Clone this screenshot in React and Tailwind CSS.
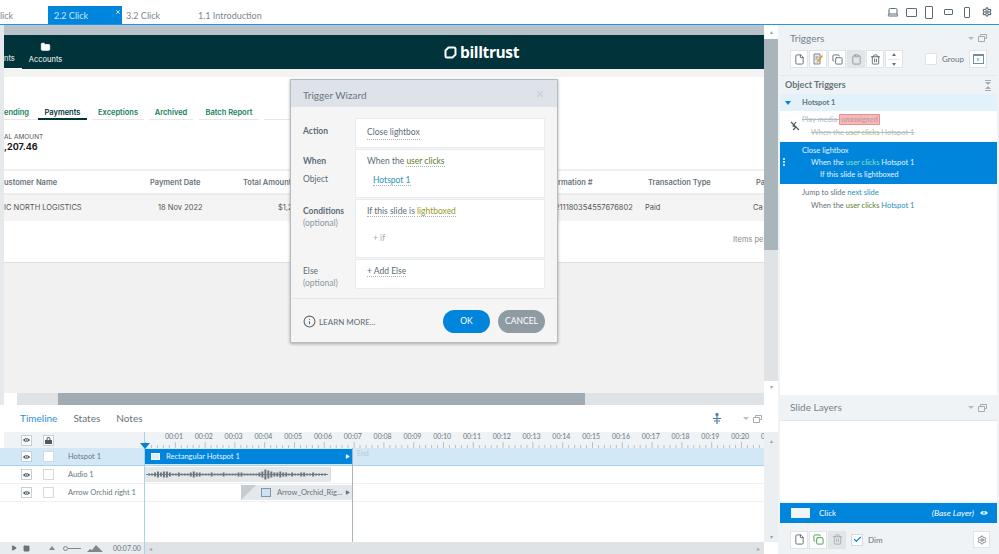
import React from 'react';
import { Laptop, Settings, File, Copy, Clipboard, Trash2, Check, Info, X, Play, Square, Folder } from 'lucide-react';

const ticks = ['00:01','00:02','00:03','00:04','00:05','00:06','00:07','00:08','00:09','00:10','00:11','00:12','00:13','00:14','00:15','00:16','00:17','00:18','00:19','00:20','0'];

function IconBtn({ children, pressed }) {
  return (
    <div className={`w-[18px] h-[18px] flex items-center justify-center border border-[#dfe4e7] ${pressed ? 'bg-[#e3e6e8]' : 'bg-white'}`}>
      {children}
    </div>
  );
}

function EyeIcon({ className = '', pupil = '#ffffff' }) {
  return (
    <svg className={className} viewBox="0 0 10 8" fill="currentColor">
      <path d="M0 4C2 .6 8 .6 10 4 8 7.4 2 7.4 0 4z" />
      <circle cx="5" cy="4" r="1.9" fill={pupil} />
      <circle cx="5" cy="4" r="1" />
    </svg>
  );
}

function EyeBox() {
  return (
    <div className="w-[11px] h-[11px] shrink-0 bg-white border border-[#c9d0d5] flex items-center justify-center">
      <EyeIcon className="w-[7px] h-[6px] text-[#4c5a62]" />
    </div>
  );
}

function PanelControls() {
  return (
    <div className="flex items-center gap-[4px]">
      <div className="w-0 h-0 border-l-[3px] border-r-[3px] border-t-[3px] border-l-transparent border-r-transparent border-t-[#b3bcc2]" />
      <svg className="w-[9px] h-[8px] text-[#a3acb2]" viewBox="0 0 9 8" fill="none" stroke="currentColor">
        <path d="M2.5 2V.5h6v4H7M.5 2.5h6v5h-6z" />
      </svg>
    </div>
  );
}

function Dotted({ className = '', children }) {
  return <span className={`border-b border-dotted border-[#aab3b9] ${className}`}>{children}</span>;
}

function Ruler() {
  const marks = [];
  for (let i = 0; i < 106; i++) {
    const x = 0.5 + i * 5.96;
    marks.push(<line key={i} x1={x} x2={x} y1={i % 5 === 0 ? 10 : 13} y2="16" stroke="#b9c1c6" strokeWidth="1" />);
  }
  return <svg className="absolute left-0 top-0 w-[620px] h-[16px]" viewBox="0 0 620 16">{marks}</svg>;
}

function Waveform() {
  const h = [1,1,2,3,2,3,3,2,1,1,2,1,1,1,2,3,2,2,1,1,1,2,1,1,1,2,1,1,1,1,2,2,1,1,1,1,1,2,3,5,4,3,2,2,3,2,2,1,2,1,1,2,2,1,1,2,1,1,1,1];
  return (
    <svg className="w-full h-full" viewBox="0 0 186 15" preserveAspectRatio="none">
      <line x1="1" x2="184" y1="7.5" y2="7.5" stroke="#7d858a" strokeWidth="1" />
      {h.map((v, i) => (
        <line key={i} x1={4 + i * 3} x2={4 + i * 3} y1={7.5 - v} y2={7.5 + v} stroke="#6d757a" strokeWidth="2" />
      ))}
    </svg>
  );
}

function Modal() {
  return (
    <div className="absolute left-[290px] top-[54px] w-[268px] h-[264px] bg-[#f5f5f5] border border-[#b4babe] shadow-[0_1px_3px_rgba(0,0,0,0.3)] text-[#5d6b74] font-['Lato',sans-serif]">
      <div className="h-[27px] bg-[#dde3e8] flex items-center justify-between pl-[12px] pr-[12px] text-[10px] text-[#6a7780]">
        <span className="mt-[3px]">Trigger Wizard</span>
        <X className="w-[10px] h-[10px] text-[#cbd2d7]" strokeWidth={3} />
      </div>
      <div className="pl-[12px] pr-[12px] pt-[11px] flex flex-col gap-[1px] text-[8.5px]">
        <div className="flex h-[30px]">
          <div className="w-[52px] pt-[7px] font-bold">Action</div>
          <div className="w-[190px] h-[30px] bg-white border border-[#e8ecef] pl-[11px] flex items-center"><Dotted>Close lightbox</Dotted></div>
        </div>
        <div className="flex h-[49px]">
          <div className="w-[52px] pt-[6px]">
            <div className="font-bold">When</div>
            <div className="mt-[5px]">Object</div>
          </div>
          <div className="w-[190px] h-[49px] bg-white border border-[#e8ecef] pl-[11px] pt-[5px]">
            <div>When the <Dotted className="text-[#5e7d2c]">user clicks</Dotted></div>
            <div className="mt-[6px] pl-[6px]"><Dotted className="text-[#2a93b4]">Hotspot 1</Dotted></div>
          </div>
        </div>
        <div className="flex h-[59px]">
          <div className="w-[52px] pt-[6px] leading-[12px]">
            <div className="font-bold">Conditions</div>
            <div className="text-[#8c979e]">(optional)</div>
          </div>
          <div className="w-[190px] h-[59px] bg-white border border-[#e8ecef] pl-[11px] pt-[5px]">
            <div><Dotted>If this slide is</Dotted> <Dotted className="text-[#9b9a2a]">lightboxed</Dotted></div>
            <div className="mt-[14px] pl-[6px] text-[#a3acb2]">+ if</div>
          </div>
        </div>
        <div className="flex h-[30px]">
          <div className="w-[52px] pt-[6px] leading-[12px]">
            <div>Else</div>
            <div className="text-[#8c979e]">(optional)</div>
          </div>
          <div className="w-[190px] h-[30px] bg-white border border-[#e8ecef] pl-[11px] pt-[5px]"><Dotted>+ Add Else</Dotted></div>
        </div>
      </div>
      <div className="mt-[9px] border-t border-[#e3e7ea] pl-[12px] pr-[12px] pt-[11px] flex items-center">
        <Info className="w-[13px] h-[13px] text-[#5d6b74]" />
        <span className="ml-[3px] text-[8px]">LEARN MORE...</span>
        <div className="ml-auto w-[47px] h-[23px] rounded-full bg-[#0085dc] text-white text-[8.5px] flex items-center justify-center">OK</div>
        <div className="ml-[8px] w-[47px] h-[23px] rounded-full bg-[#8f9ba3] text-white text-[8.5px] flex items-center justify-center">CANCEL</div>
      </div>
    </div>
  );
}

function Slide() {
  return (
    <div className="relative flex-1 min-w-0 overflow-hidden flex flex-col bg-[#f1f1f1] font-['Inter',sans-serif]">
      <div className="h-[10px] bg-[#b9c3c9] shrink-0" />
      <div className="h-[34px] bg-[#00333a] shrink-0 flex items-center text-white text-[7.5px] relative">
        <div className="absolute left-0 bottom-0 w-[18px] h-[1px] bg-white" />
        <span className="mt-[14px]">nts</span>
        <div className="ml-[14px] pt-[3px] flex flex-col items-center gap-[2px]">
          <Folder className="w-[11px] h-[10px] fill-white text-white" />
          <span>Accounts</span>
        </div>
        <div className="ml-auto mr-[245px] mt-[1px] flex items-center gap-[3px] text-[15.5px] font-bold tracking-tight">
          <svg className="w-[13px] h-[13px]" viewBox="0 0 13 13" fill="none" stroke="white" strokeWidth="2">
            <path d="M4.5 1.5H10a1.5 1.5 0 011.5 1.5v5.5l-3 3H3A1.5 1.5 0 011.5 10V4.5z" />
          </svg>
          <span className="font-['Open_Sans',sans-serif]">billtrust</span>
        </div>
      </div>
      <div className="h-[8px] shrink-0 bg-[#f3f3f3]" />
      <div className="h-[186px] shrink-0 bg-white border-b border-[#dfdfdf]">
        <div className="h-[44px] pt-[32px] flex text-[7.5px] font-semibold text-[#14805e] leading-none">
          <span className="w-[34px] border-b border-[#e8e8e8] h-[11px]">ending</span>
          <span className="w-[49px] text-center text-[#00333a] border-b-2 border-[#00333a] h-[11px]">Payments</span>
          <span className="ml-[5px] w-[52px] text-center border-b border-[#e8e8e8] h-[11px]">Exceptions</span>
          <span className="ml-[5px] w-[44px] text-center border-b border-[#e8e8e8] h-[11px]">Archived</span>
          <span className="ml-[6px] w-[60px] text-center border-b border-[#e8e8e8] h-[11px]">Batch Report</span>
          <span className="ml-[5px] w-[26px] border-b border-[#e8e8e8] h-[11px]" />
        </div>
        <div className="mt-[13px] text-[6.5px] text-[#555] leading-none">AL AMOUNT</div>
        <div className="mt-[1px] text-[9px] font-bold text-[#1a1a1a] leading-none">,207.46</div>
        <div className="mt-[18px] pt-[3px] border-t-2 border-[#efefef] h-[24px] grid grid-cols-[146px_93px_313px_92px_108px_20px] items-center text-[7.5px] font-semibold text-[#66737b] whitespace-nowrap">
          <span>ustomer Name</span><span>Payment Date</span><span>Total Amount</span><span>irmation #</span><span>Transaction Type</span><span>Pa</span>
        </div>
        <div className="h-[28px] bg-[#f4f4f4] border-t-2 border-[#ececec] grid grid-cols-[154px_120px_278px_89px_108px_20px] items-center text-[7.5px] text-[#555] whitespace-nowrap">
          <span>IC NORTH LOGISTICS</span><span>18 Nov 2022</span><span>$1,2</span><span className="-ml-[1px]">211180354557676802</span><span>Paid</span><span>Ca</span>
        </div>
        <div className="mt-[13px] pl-[729px] text-[7.5px] text-[#8a8a8a] whitespace-nowrap">Items pe</div>
      </div>
    </div>
  );
}

function TrackLabel({ name, active }) {
  return (
    <div className={`h-[18px] flex items-center pl-[21px] text-[7.5px] text-[#6a7780] border-b ${active ? 'bg-[#d3e8f6] border-[#a9d0ec]' : 'border-[#eef0f2]'}`}>
      <EyeBox />
      <div className="ml-[11px] w-[11px] h-[11px] shrink-0 bg-white border border-[#d5dade]" />
      <span className="ml-[14px] whitespace-nowrap">{name}</span>
    </div>
  );
}

function Timeline() {
  return (
    <div className="h-[149px] bg-white flex flex-col font-['Lato',sans-serif] pl-[4px]">
      <div className="h-[27px] shrink-0 flex items-center pl-[16px] pr-[16px] text-[10px] text-[#66737b] gap-[16px]">
        <span className="text-[#2f8fd8]">Timeline</span>
        <span>States</span>
        <span>Notes</span>
        <svg className="ml-auto w-[12px] h-[12px] text-[#4f7fa8]" viewBox="0 0 12 12" fill="none" stroke="currentColor" strokeWidth="1.2">
          <path d="M6 1v10M2 5.5h8M3 8h6" />
          <circle cx="6" cy="1.5" r="1" fill="currentColor" />
        </svg>
        <div className="ml-[4px]"><PanelControls /></div>
      </div>
      <div className="flex-1 min-h-0 flex">
        <div className="w-[140px] shrink-0 flex flex-col">
          <div className="h-[16px] bg-[#f0f3f5] flex items-center pl-[17px]">
            <EyeBox />
            <div className="ml-[11px] w-[11px] h-[11px] bg-white border border-[#c9d0d5] flex items-center justify-center">
              <svg className="w-[7px] h-[7px] text-[#4c5a62]" viewBox="0 0 7 7" fill="currentColor">
                <path d="M1.5 3V2a2 2 0 014 0v1H7v4H0V3zm1 0h2V2a1 1 0 00-2 0z" />
              </svg>
            </div>
          </div>
          <div className="-ml-[4px]">
            <TrackLabel name="Hotspot 1" active />
            <TrackLabel name="Audio 1" />
            <TrackLabel name="Arrow Orchid right 1" />
          </div>
          <div className="flex-1" />
          <div className="h-[12px] bg-[#e8ecee] flex items-center text-[7px] text-[#66737b] -ml-[4px] pl-[11px]">
            <Play className="w-[6px] h-[6px] fill-[#66737b] text-[#66737b]" />
            <Square className="ml-[6px] w-[7px] h-[7px] fill-[#66737b] text-[#66737b]" />
            <div className="ml-[19px] w-0 h-0 border-l-[3px] border-r-[3px] border-b-[4px] border-l-transparent border-r-transparent border-b-[#7c878e]" />
            <div className="ml-[8px] w-[18px] flex items-center">
              <div className="w-[5px] h-[5px] shrink-0 rounded-full border border-[#7c878e]" />
              <div className="flex-1 h-[1px] bg-[#7c878e]" />
            </div>
            <svg className="ml-[6px] w-[16px] h-[7px] text-[#7c878e]" viewBox="0 0 16 7" fill="currentColor">
              <path d="M0 7l3-3 2 1 4-5 7 7z" />
            </svg>
            <span className="ml-[10px]">00:07.00</span>
          </div>
        </div>
        <div className="relative flex-1 min-w-0 flex flex-col border-l border-[#a9d0ec]">
          <div className="relative h-[16px] bg-[#f0f3f5] overflow-hidden">
            <Ruler />
            <div className="relative flex pl-[20px] text-[7px] text-[#6a7780] leading-none pt-[1px]">
              {ticks.map((t) => <span key={t} className="w-[29.8px] shrink-0">{t}</span>)}
            </div>
          </div>
          <div className="h-[18px] bg-[#d3e8f6] border-b border-[#a9d0ec] flex">
            <div className="w-[207px] h-[15px] mt-[1px] bg-[#0085dc] flex items-center pl-[6px] pr-[2px] text-[7.5px] text-[#e6f3fc]">
              <div className="w-[9px] h-[7px] bg-[#dfeefa] border border-white shrink-0" />
              <span className="ml-[6px]">Rectangular Hotspot 1</span>
              <Play className="ml-auto w-[5px] h-[5px] fill-white text-white" />
            </div>
            <span className="ml-[5px] text-[7px] text-[#b9c6cf]">End</span>
          </div>
          <div className="h-[18px] border-b border-[#eef0f2] pt-[1px]">
            <div className="w-[186px] h-[15px] bg-[#e4e8ea] rounded-r-[2px] border-r border-[#d5dade]"><Waveform /></div>
          </div>
          <div className="h-[18px] border-b border-[#eef0f2] pl-[96px] pt-[1px]">
            <div className="w-[111px] h-[15px] bg-[#e4e8ea] flex items-center pr-[2px] text-[7.5px] text-[#66737b] whitespace-nowrap">
              <div className="w-0 h-0 shrink-0 border-t-[15px] border-r-[15px] border-r-transparent border-t-[#c5ccd1]" />
              <div className="ml-[5px] w-[10px] h-[9px] shrink-0 bg-[#cfe0ef] border border-[#7c98b0]" />
              <span className="ml-[6px]">Arrow_Orchid_Rig...</span>
              <Play className="ml-auto w-[5px] h-[5px] fill-[#66737b] text-[#66737b]" />
            </div>
          </div>
          <div className="absolute left-[207px] top-[16px] bottom-0 w-[1px] bg-[#a9b4bb]" />
          <div className="absolute -left-[5px] top-[11px] w-0 h-0 border-l-[5px] border-r-[5px] border-t-[6px] border-l-transparent border-r-transparent border-t-[#0085dc]" />
          <div className="flex-1" />
          <div className="h-[12px] bg-[#dfe3e6] relative z-10 flex items-center justify-between px-[4px] text-[6px] text-[#9aa5ac]">
            <span>◂</span><span>▸</span>
          </div>
        </div>
        {/* vertical scrollbar of the tracks */}
        <div className="w-[14px] shrink-0 flex flex-col bg-[#eceff1] text-[6px] text-[#9aa5ac]">
          <div className="h-[16px] flex items-center justify-center">▴</div>
          <div className="flex-1" />
          <div className="h-[12px] flex items-center justify-center">▾</div>
          <div className="h-[12px] bg-white" />
        </div>
      </div>
    </div>
  );
}

function TriggerLine({ children, indent = 0, className = '' }) {
  const pad = indent === 0 ? 'pl-[22px]' : indent === 1 ? 'pl-[31px]' : 'pl-[40px]';
  return <div className={`${pad} h-[12px] leading-[12px] whitespace-nowrap ${className}`}>{children}</div>;
}

function RightPanel() {
  return (
    <div className="w-[221px] shrink-0 bg-[#f0f3f6] flex flex-col font-['Lato',sans-serif] text-[#66737b] pl-[2px] pr-[2px]">
      <div className="h-[50px] shrink-0 pl-[10px] pr-[10px] pt-[5px]">
        <div className="flex items-center justify-between h-[16px] text-[10px] text-[#75828a]">
          <span>Triggers</span>
          <PanelControls />
        </div>
        <div className="mt-[4px] flex items-center gap-[1px]">
          <IconBtn><File className="w-[11px] h-[11px] text-[#5d6b74]" /></IconBtn>
          <IconBtn>
            <svg className="w-[12px] h-[12px]" viewBox="0 0 12 12" fill="none">
              <path d="M2 1h6v10H2z" fill="#e9ecee" stroke="#7c878e" />
              <path d="M3.5 4h3M3.5 6h2" stroke="#7c878e" />
              <path d="M5 8l5-6 1 1-5 6-1.5.5z" fill="#e8941f" />
            </svg>
          </IconBtn>
          <IconBtn><Copy className="w-[11px] h-[11px] text-[#5d6b74]" /></IconBtn>
          <IconBtn pressed><Clipboard className="w-[11px] h-[11px] text-[#8c979e]" /></IconBtn>
          <IconBtn><Trash2 className="w-[11px] h-[11px] text-[#5d6b74]" /></IconBtn>
          <div className="w-[18px] h-[18px] bg-white border border-[#dfe4e7] flex flex-col items-center justify-center gap-[3px]">
            <div className="w-0 h-0 border-l-[2px] border-r-[2px] border-b-[3px] border-l-transparent border-r-transparent border-b-[#66737b]" />
            <div className="w-[12px] h-[1px] bg-[#e3e7ea]" />
            <div className="w-0 h-0 border-l-[2px] border-r-[2px] border-t-[3px] border-l-transparent border-r-transparent border-t-[#66737b]" />
          </div>
          <div className="ml-[21px] w-[12px] h-[12px] bg-white border border-[#dfe4e7]" />
          <span className="ml-[4px] text-[8px]">Group</span>
          <div className="ml-auto w-[18px] h-[18px] bg-white border border-[#dfe4e7] flex items-center justify-center">
            <div className="w-[11px] h-[10px] border border-[#6f8fa8] border-t-2 text-[6px] leading-none text-center text-[#6f8fa8]">x</div>
          </div>
        </div>
      </div>
      <div className="h-[19px] shrink-0 border-t border-[#e3e7ea] flex items-center justify-between pl-[5px] pr-[5px] text-[9px] font-bold">
        <span>Object Triggers</span>
        <div className="flex flex-col gap-[1px] items-center mr-[1px]">
          <div className="w-[6px] h-[1px] bg-[#a3acb2]" />
          <div className="w-0 h-0 border-l-[3px] border-r-[3px] border-t-[3px] border-l-transparent border-r-transparent border-t-[#a3acb2]" />
          <div className="w-0 h-0 border-l-[3px] border-r-[3px] border-b-[3px] border-l-transparent border-r-transparent border-b-[#a3acb2]" />
          <div className="w-[6px] h-[1px] bg-[#a3acb2]" />
        </div>
      </div>
      <div className="h-[17px] shrink-0 bg-[#e3f2fa] flex items-center pl-[5px] text-[7.5px] font-bold">
        <div className="w-0 h-0 border-l-[3px] border-r-[3px] border-t-[4px] border-l-transparent border-r-transparent border-t-[#0085dc]" />
        <span className="ml-[11px]">Hotspot 1</span>
      </div>
      <div className="h-[284px] shrink-0 bg-white text-[7.5px]">
        <div className="h-[31px] pt-[3px] relative text-[#b3bcc2]">
          <svg className="absolute left-[10px] top-[10px] w-[10px] h-[10px] text-[#4c5a62]" viewBox="0 0 10 10" fill="none" stroke="currentColor" strokeWidth="1.2">
            <path d="M1 1l8 8M6 1L3 5l3 1-3 3" />
          </svg>
          <TriggerLine className="line-through">Play media <span className="bg-[#f6b9b9] border border-[#e88f8f] rounded-[1px] px-[1px] text-[#d88a8a]">unassigned</span></TriggerLine>
          <TriggerLine indent={1} className="line-through mt-[1px]">When the <span className="text-[#a5b58a]">user clicks</span> Hotspot 1</TriggerLine>
        </div>
        <div className="h-[42px] bg-[#0085dc] text-[#e6f3fc] pt-[3px] relative">
          <div className="absolute left-[3px] top-[16px] flex flex-col gap-[1px]">
            <div className="w-[2px] h-[2px] bg-[#bfe0f6]" />
            <div className="w-[2px] h-[2px] bg-[#bfe0f6]" />
            <div className="w-[2px] h-[2px] bg-[#bfe0f6]" />
          </div>
          <TriggerLine>Close lightbox</TriggerLine>
          <TriggerLine indent={1}>When the <span className="text-[#8fe3c0]">user clicks</span> Hotspot 1</TriggerLine>
          <TriggerLine indent={2}>If this slide is lightboxed</TriggerLine>
        </div>
        <div className="pt-[3px]">
          <TriggerLine>Jump to slide <span className="text-[#2a8fb4]">next slide</span></TriggerLine>
          <TriggerLine indent={1} className="mt-[1px]">When the <span className="text-[#5e7d2c]">user clicks</span> <span className="text-[#2a8fb4]">Hotspot 1</span></TriggerLine>
        </div>
      </div>
      <div className="h-[26px] shrink-0 border-b border-[#e3e7ea] flex items-center justify-between pl-[10px] pr-[10px] text-[10px] text-[#75828a]">
        <span>Slide Layers</span>
        <PanelControls />
      </div>
      <div className="flex-1 bg-white" />
      <div className="mt-[2px] h-[20px] shrink-0 bg-[#0085dc] flex items-center pl-[11px] pr-[9px] text-white text-[8px]">
        <div className="w-[19px] h-[10px] bg-[#eef5fa]" />
        <span className="ml-[9px]">Click</span>
        <span className="ml-auto italic text-[8.5px]">(Base Layer)</span>
        <EyeIcon className="ml-[6px] w-[8px] h-[6px] text-white" pupil="#0085dc" />
      </div>
      <div className="h-[31px] shrink-0 flex items-center pl-[10px] pr-[7px] pt-[2px] gap-[1px] text-[8px]">
        <IconBtn><File className="w-[11px] h-[11px] text-[#5d6b74]" /></IconBtn>
        <IconBtn><Copy className="w-[11px] h-[11px] text-[#3d9a4a]" /></IconBtn>
        <IconBtn pressed><Trash2 className="w-[11px] h-[11px] text-[#a3acb2]" /></IconBtn>
        <div className="ml-[4px] w-[12px] h-[12px] bg-white border border-[#d5dade] flex items-center justify-center">
          <Check className="w-[9px] h-[9px] text-[#0085dc]" strokeWidth={3} />
        </div>
        <span className="ml-[4px]">Dim</span>
        <div className="ml-auto w-[17px] h-[17px] bg-white border border-[#dfe4e7] flex items-center justify-center">
          <Settings className="w-[10px] h-[10px] text-[#66737b]" />
        </div>
      </div>
    </div>
  );
}

export default function App() {
  return (
    <div className="w-[999px] h-[554px] overflow-hidden bg-white flex flex-col relative">
      {/* slide tabs */}
      <div className="h-[25px] shrink-0 border-b border-[#2196e8] flex items-end font-['Lato',sans-serif] text-[9px] text-[#7c878e]">
        <div className="w-[48px] h-[18px] pt-[2px] flex items-center"><span>lick</span></div>
        <div className="relative w-[74px] h-[18px] bg-[#0085dc] text-[#cfe6f7] pt-[2px] flex items-center pl-[6px]">
          <span>2.2 Click</span>
          <X className="absolute right-[1px] top-[3px] w-[6px] h-[6px] text-white" strokeWidth={3} />
        </div>
        <div className="w-[76px] h-[18px] pt-[2px] flex items-center pl-[4px]">3.2 Click</div>
        <div className="h-[18px] pt-[2px] flex items-center">1.1 Introduction</div>
        <div className="ml-auto h-[24px] pr-[7px] flex items-center text-[#5d6b74]">
          <Laptop className="w-[12px] h-[12px]" />
          <div className="ml-[7px] w-[11px] h-[9px] border border-[#5d6b74] rounded-[1px]" />
          <div className="ml-[8px] w-[8px] h-[13px] border border-[#5d6b74] rounded-[1px]" />
          <div className="ml-[11px] w-[9px] h-[6px] border border-[#5d6b74] rounded-[1px]" />
          <div className="ml-[11px] w-[6px] h-[11px] border border-[#5d6b74] rounded-[1px]" />
          <Settings className="ml-[12px] w-[10px] h-[10px]" strokeWidth={3} />
        </div>
      </div>
      <div className="flex-1 min-h-0 flex">
        <div className="flex-1 min-w-0 flex flex-col bg-[#f0f3f5]">
          <div className="h-[380px] shrink-0 flex flex-col relative">
            <div className="flex-1 min-h-0 flex">
              <div className="w-[4px] shrink-0 bg-[#e6e9eb]" />
              <Slide />
              <div className="w-[14px] shrink-0 bg-[#dfe3e6] flex flex-col">
                <div className="h-[14px] bg-white flex items-center justify-center text-[6px] text-[#9aa5ac]">▴</div>
                <div className="h-[211px] bg-[#a9b4bb]" />
                <div className="flex-1" />
                <div className="h-[12px] bg-white flex items-center justify-center text-[6px] text-[#9aa5ac]">▾</div>
              </div>
            </div>
            <div className="h-[12px] shrink-0 bg-[#dfe3e6] flex items-stretch">
              <div className="w-[4px] bg-[#e6e9eb]" />
              <div className="w-[13px] bg-white" />
              <div className="ml-[41px] w-[527px] bg-[#a0abb3]" />
              <div className="ml-auto w-[14px] bg-white" />
            </div>
            <Modal />
          </div>
          <Timeline />
        </div>
        <RightPanel />
      </div>
    </div>
  );
}
